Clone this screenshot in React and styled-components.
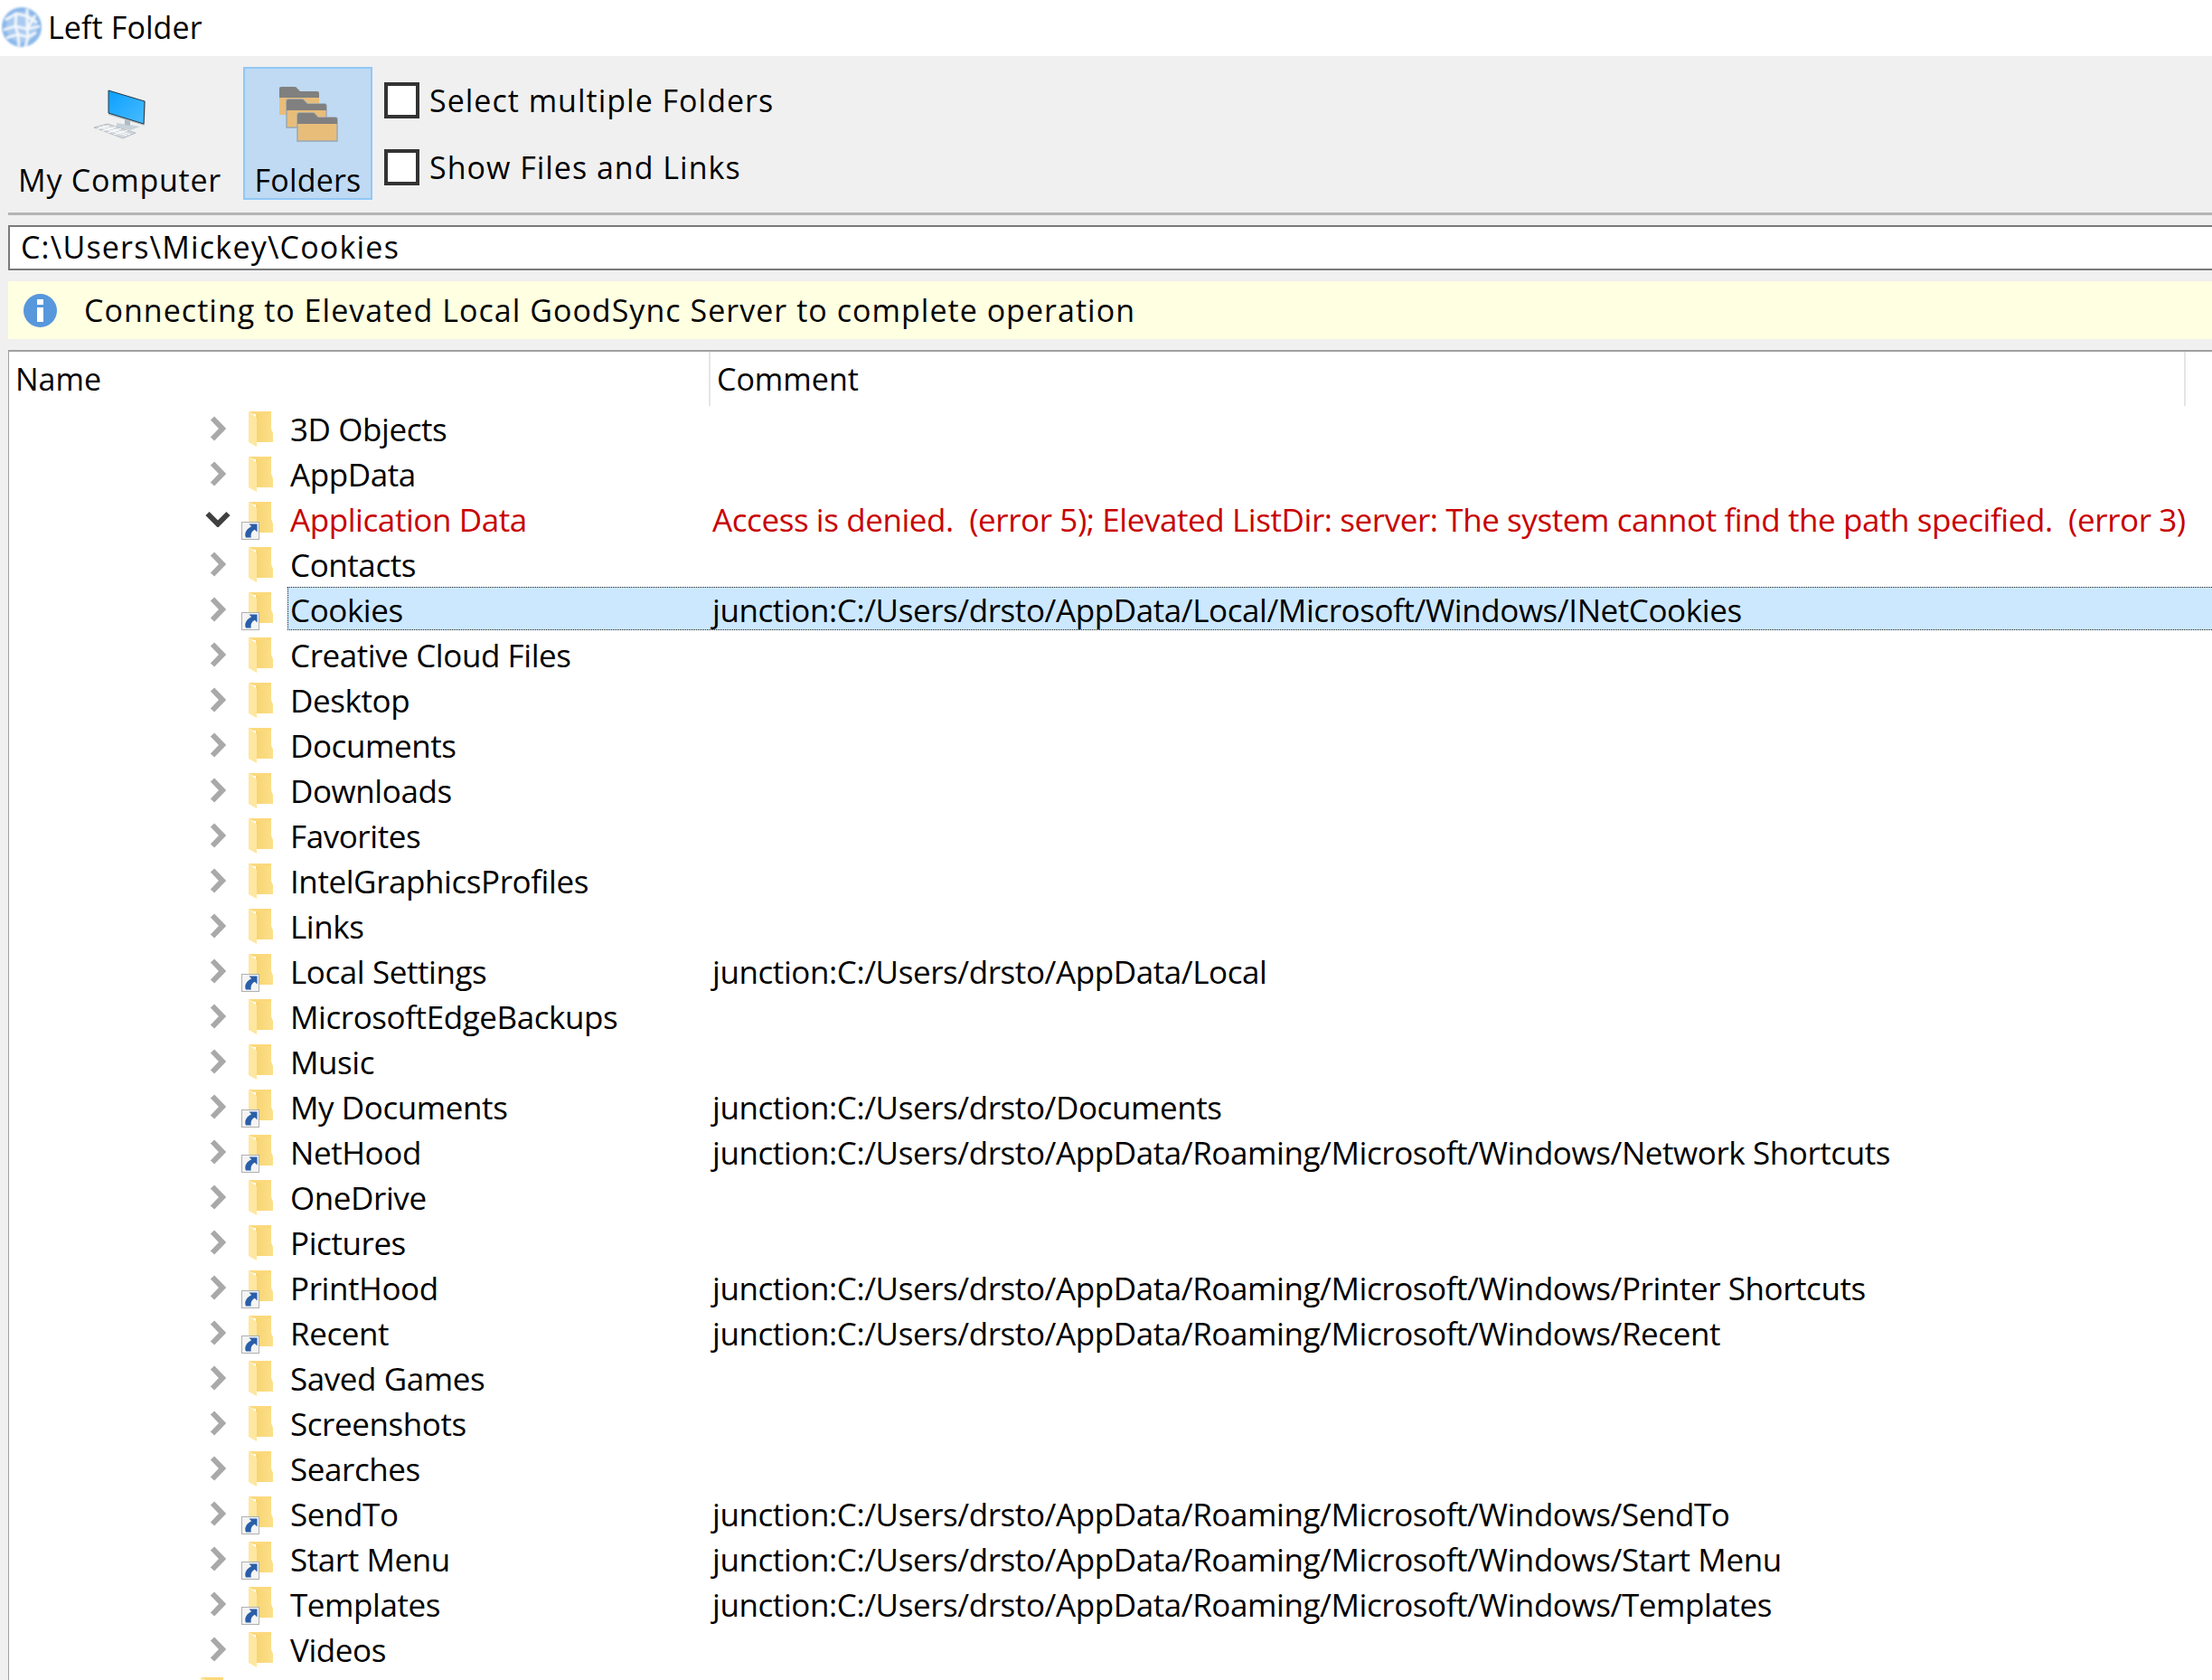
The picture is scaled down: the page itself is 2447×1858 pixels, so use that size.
import React from "react"
import styled, { createGlobalStyle } from "styled-components"

const Global = createGlobalStyle`
	html, body { margin: 0; padding: 0; background: #f0f0f0; }
	body { font-family: "Open Sans", "Liberation Sans", sans-serif; color: #000; }
	* { box-sizing: border-box; }
`

const Page = styled.div`
	width: 2447px;
	height: 1858px;
	overflow: hidden;
	display: flex;
	flex-direction: column;
	background: #f0f0f0;
`

const TitleBar = styled.div`
	height: 62px;
	flex: none;
	background: #fff;
	display: flex;
	align-items: center;
	gap: 6px;
	padding: 0 0 2px 1px;
	font-size: 34px;
	letter-spacing: 0.1px;
`

const Toolbar = styled.div`
	height: 173px;
	flex: none;
	display: flex;
	align-items: flex-start;
	padding: 12px 0 0 9px;
`

const ToolButton = styled.div`
	height: 147px;
	width: ${props => props.$width}px;
	margin-right: ${props => props.$gap || 0}px;
	flex: none;
	display: flex;
	flex-direction: column;
	align-items: center;
	border: 2px solid ${props => props.$active ? "#90c8f6" : "transparent"};
	background: ${props => props.$active ? "#bfdaf2" : "transparent"};
	font-size: 34px;
	letter-spacing: ${props => props.$active ? 0.2 : 0.75}px;
	white-space: nowrap;
`

const ToolIcon = styled.div`
	height: 100px;
	flex: none;
	display: flex;
	align-items: center;
	justify-content: center;
`

const Options = styled.div`
	display: flex;
	flex-direction: column;
	gap: 34px;
	padding-top: 17px;
	margin-left: 13px;
`

const Option = styled.label`
	display: flex;
	align-items: center;
	gap: 11px;
	height: 40px;
	font-size: 34px;
	letter-spacing: 1px;
	white-space: nowrap;
`

const CheckBox = styled.span`
	width: 39px;
	height: 40px;
	flex: none;
	background: #fff;
	border: 4px solid #333;
`

const Divider = styled.div`
	height: 3px;
	flex: none;
	margin-left: 9px;
	background: #b4b4b4;
`

const PathBox = styled.div`
	height: 50px;
	flex: none;
	margin: 11px 0 0 9px;
	padding: 0 0 2px 12px;
	display: flex;
	align-items: center;
	background: #fff;
	border: solid #7a7a7a;
	border-width: 2px 0 2px 2px;
	font-size: 34px;
	letter-spacing: 1.2px;
`

const Notice = styled.div`
	height: 64px;
	flex: none;
	margin: 12px 0 0 9px;
	padding-left: 17px;
	display: flex;
	align-items: center;
	gap: 30px;
	background: #ffffe1;
	font-size: 34px;
	letter-spacing: 1.03px;
`

const Table = styled.div`
	flex: 1;
	min-height: 0;
	margin: 12px 0 0 9px;
	background: #fff;
	border: solid #a0a0a0;
	border-width: 2px 0 0 1px;
	overflow: hidden;
`

const Header = styled.div`
	height: 60px;
	display: grid;
	grid-template-columns: 776px 1632px 1fr;
`

const HeaderCell = styled.div`
	display: flex;
	align-items: center;
	padding-left: ${props => props.$pad}px;
	font-size: 34px;
	border-right: ${props => props.$last ? "none" : "2px solid #e5e5e5"};
`

const Row = styled.div`
	height: 50px;
	display: flex;
	align-items: center;
	padding-left: ${props => props.$indent}px;
	color: ${props => props.$error ? "#c80000" : "#000"};
	font-size: 35px;
	letter-spacing: -0.42px;
`

const Expander = styled.div`
	width: 40px;
	flex: none;
	display: flex;
	justify-content: center;
`

const FolderSlot = styled.div`
	position: relative;
	width: 27px;
	height: 39px;
	flex: none;
	margin: 0 16px 0 14px;
`

const Badge = styled.div`
	position: absolute;
	left: -8px;
	top: 22px;
	width: 20px;
	height: 20px;
	background: #f4f4f4;
	border: 1px solid #b0b0b0;
	display: flex;
	align-items: center;
	justify-content: center;
`

const Label = styled.div`
	flex: 1;
	align-self: flex-start;
	height: 48px;
	padding: 2px 0 0 2px;
	display: flex;
	align-items: center;
	white-space: nowrap;
	border: 1px ${props => props.$selected ? "dotted #222" : "solid transparent"};
	border-right: none;
	background: ${props => props.$selected ? "#cce8ff" : "transparent"};
`

const Name = styled.div`
	width: 467px;
	flex: none;
`

const GlobeIcon = () => (
	<svg width="46" height="48" viewBox="0 0 46 48">
		<defs>
			<filter id="soft"><feGaussianBlur stdDeviation="0.8" /></filter>
		</defs>
		<g filter="url(#soft)">
			<circle cx="23" cy="24" r="22" fill="#8ab8ea" />
			<circle cx="23" cy="24" r="17" fill="#a9cbef" />
			<path d="M5 16l12-7 12 3 11 7M3 27l13-4 13 3 14-3M6 36l13-4 11 3 9-5M17 9l-1 14 3 9 1 13M29 4v8l0 14 1 9-3 11M38 11l-9 15" stroke="#f4f8fd" strokeWidth="2.8" fill="none" />
		</g>
	</svg>
)

const ComputerIcon = () => (
	<svg width="58" height="55" viewBox="0 0 58 55">
		<defs>
			<linearGradient id="screen" x1="0" y1="0" x2="1" y2="1">
				<stop offset="0" stopColor="#0a9fff" />
				<stop offset="1" stopColor="#4bbcff" />
			</linearGradient>
		</defs>
		<path d="M25 37l26 4-11 4-15-4z" fill="#c6d3da" />
		<path d="M34 32l6 1 0 7-6-1z" fill="#aebbc4" />
		<path d="M16 1l41 12-1 27-40-12z" fill="#b9c2c8" />
		<path d="M16 1l40 12-1 25-39-12z" fill="url(#screen)" stroke="#2b3a46" strokeWidth="1" />
		<path d="M0 42l15-4 31 10-14 6z" fill="#d3d9de" stroke="#aab2b9" strokeWidth="0.8" />
		<path d="M5 41l31 10M9 40l31 10M3 44l14-4M9 46l15-5M15 48l15-5M22 50l15-5" stroke="#fff" strokeWidth="1" fill="none" />
	</svg>
)

const FolderSmall = ({ x, y, edge }) => (
	<g transform={`translate(${x} ${y})`}>
		<path d="M0 2q0-2 2-2h15q2 0 3 2l3 3h19q2 0 2 2v24H0z" fill="#e8bd7a" stroke={edge ? "#9aa7b2" : "none"} strokeWidth="1.4" />
		<path d="M0 2q0-2 2-2h15q2 0 3 2l3 3h19q2 0 2 2v5H0z" fill="#808080" />
	</g>
)

const FoldersIcon = () => (
	<svg width="66" height="63" viewBox="-1 -1 66 63">
		<FolderSmall x={0} y={0} />
		<FolderSmall x={8} y={14} edge />
		<FolderSmall x={20} y={29} edge />
	</svg>
)

const InfoIcon = () => (
	<svg width="37" height="37" viewBox="0 0 37 37">
		<circle cx="18.500" cy="18.500" r="18.500" fill="#5797dc" />
		<rect x="15" y="6" width="7" height="6" fill="#fff" />
		<rect x="15" y="15" width="7" height="16" fill="#fff" />
	</svg>
)

const Chevron = ({ open }) => open ? (
	<svg width="28" height="18" viewBox="0 0 28 18">
		<path d="M2.500 3l11.500 11.500L25.500 3" fill="none" stroke="#404040" strokeWidth="6" />
	</svg>
) : (
	<svg width="18" height="28" viewBox="0 0 18 28">
		<path d="M3 2.500l11 11.500L3 25.500" fill="none" stroke="#a9a9a9" strokeWidth="6" />
	</svg>
)

const FolderIcon = ({ id }) => (
	<svg width="27" height="39" viewBox="0 0 27 39">
		<defs>
			<linearGradient id={id} x1="0" y1="0" x2="1" y2="0">
				<stop offset="0" stopColor="#f5cf68" />
				<stop offset="1" stopColor="#fce08a" />
			</linearGradient>
		</defs>
		<path d="M0 0h25v19l2 5v10H8V0z" fill={`url(#${id})`} />
		<path d="M0 0l9 7v32l-9-5z" fill="#fee7a0" />
		<path d="M0 0h25v3H5z" fill="#fbd97c" />
	</svg>
)

const ShortcutArrow = () => (
	<svg width="16" height="16" viewBox="0 0 16 16">
		<path d="M6.500 0.500H15.500V9.500L12.800 6.800C9.500 8.500 8 11.500 8.800 15.500H3C0.800 10.500 4 5.500 9.200 3.200z" fill="#2a5ea8" />
	</svg>
)

const P = "junction:C:/Users/drsto/"

const rows = [
	["3D Objects"],
	["AppData"],
	["Application Data", "Access is denied.\u00a0 (error 5); Elevated ListDir: server: The system cannot find the path specified.\u00a0 (error 3)", "error"],
	["Contacts"],
	["Cookies", P + "AppData/Local/Microsoft/Windows/INetCookies", "selected"],
	["Creative Cloud Files"],
	["Desktop"],
	["Documents"],
	["Downloads"],
	["Favorites"],
	["IntelGraphicsProfiles"],
	["Links"],
	["Local Settings", P + "AppData/Local"],
	["MicrosoftEdgeBackups"],
	["Music"],
	["My Documents", P + "Documents"],
	["NetHood", P + "AppData/Roaming/Microsoft/Windows/Network Shortcuts"],
	["OneDrive"],
	["Pictures"],
	["PrintHood", P + "AppData/Roaming/Microsoft/Windows/Printer Shortcuts"],
	["Recent", P + "AppData/Roaming/Microsoft/Windows/Recent"],
	["Saved Games"],
	["Screenshots"],
	["Searches"],
	["SendTo", P + "AppData/Roaming/Microsoft/Windows/SendTo"],
	["Start Menu", P + "AppData/Roaming/Microsoft/Windows/Start Menu"],
	["Templates", P + "AppData/Roaming/Microsoft/Windows/Templates"],
	["Videos"],
]

export default function App() {
	return (
		<Page>
			<Global />
			<TitleBar>
				<GlobeIcon />
				Left Folder
			</TitleBar>
			<Toolbar>
				<ToolButton $width={247} $gap={13}>
					<ToolIcon><ComputerIcon /></ToolIcon>
					My Computer
				</ToolButton>
				<ToolButton $width={143} $active>
					<ToolIcon><FoldersIcon /></ToolIcon>
					Folders
				</ToolButton>
				<Options>
					<Option><CheckBox />Select multiple Folders</Option>
					<Option><CheckBox />Show Files and Links</Option>
				</Options>
			</Toolbar>
			<Divider />
			<PathBox>C:\Users\Mickey\Cookies</PathBox>
			<Notice>
				<InfoIcon />
				Connecting to Elevated Local GoodSync Server to complete operation
			</Notice>
			<Table>
				<Header>
					<HeaderCell $pad={7}>Name</HeaderCell>
					<HeaderCell $pad={7}>Comment</HeaderCell>
					<HeaderCell $last />
				</Header>
				{rows.map(([name, comment, kind], i) => (
					<Row key={name} $indent={211} $error={kind === "error"}>
						<Expander><Chevron open={kind === "error"} /></Expander>
						<FolderSlot>
							<FolderIcon id={"fold" + i} />
							{comment && <Badge><ShortcutArrow /></Badge>}
						</FolderSlot>
						<Label $selected={kind === "selected"}>
							<Name>{name}</Name>
							{comment}
						</Label>
					</Row>
				))}
				<Row $indent={158}>
					<Expander />
					<FolderSlot><FolderIcon id="foldLast" /></FolderSlot>
				</Row>
			</Table>
		</Page>
	)
}
